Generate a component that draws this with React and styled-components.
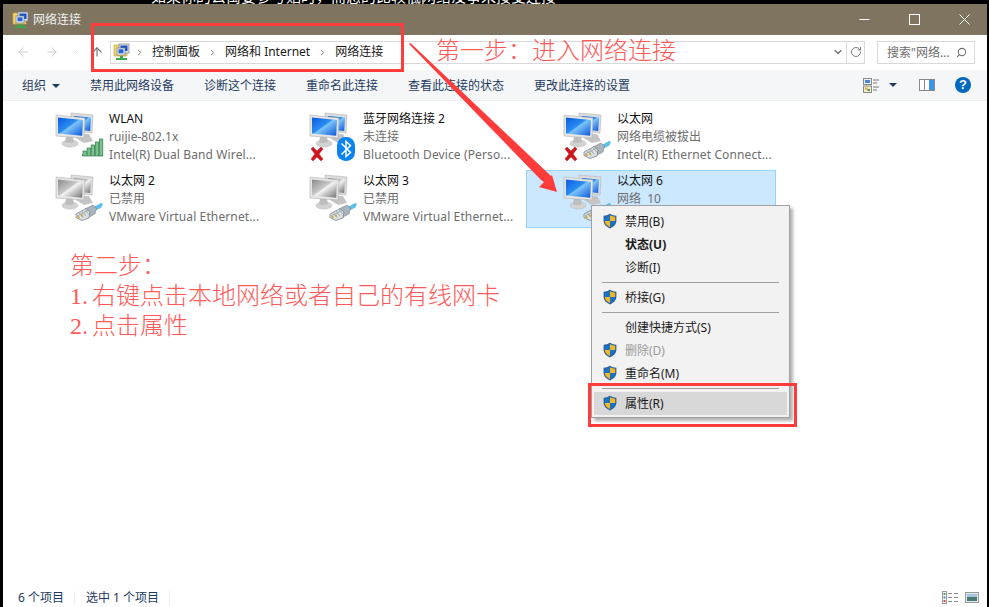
import React, { useId } from "react";
import styled, { createGlobalStyle } from "styled-components";
import { ArrowLeft, ArrowRight, ArrowUp, ChevronDown, ChevronRight, RotateCw, Search } from "lucide-react";

const UI = `"Noto Sans", "Noto Sans CJK SC", sans-serif`;
const RED = "#ff3b3b";

const Global = createGlobalStyle`
  html, body { margin: 0; padding: 0; background: #000; }
  body { font-family: ${UI}; font-size: 12px; overflow: hidden; }
`;

const Stage = styled.div`
  position: relative;
  width: 989px;
  height: 607px;
  overflow: hidden;
  background: #000;
  display: flex;
  flex-direction: column;
  padding: 0 2px 0 3px;
  box-sizing: border-box;
`;
const ClippedStrip = styled.div`
  height: 4px;
  flex: none;
  overflow: hidden;
  color: #fff;
  font-size: 15px;
  padding-left: 148px;
  white-space: nowrap;
`;
const StripText = styled.span`
  display: block;
  line-height: 16px;
  margin-top: -12px;
`;
const Win = styled.div`
  flex: 1;
  display: flex;
  flex-direction: column;
  background: #fff;
  min-height: 0;
`;
const TitleBar = styled.div`
  height: 31px;
  flex: none;
  background: #7f7460;
  color: #f0f0f0;
  display: flex;
  align-items: center;
  padding-left: 9px;
  gap: 4px;
  font-size: 12px;
`;
const TitleText = styled.span`
  flex: 1;
  line-height: 30px;
`;
const Caption = styled.div`
  width: 46px;
  height: 30px;
  display: flex;
  align-items: center;
  justify-content: center;
  color: #fff;
`;
const AddressRow = styled.div`
  height: 35px;
  flex: none;
  background: #fff;
  display: flex;
  align-items: center;
  box-sizing: border-box;
  padding: 0 12px 1px 0;
`;
const NavBtn = styled.div`
  width: ${(p) => p.$w}px;
  display: flex;
  justify-content: center;
  color: ${(p) => p.$c};
  flex: none;
`;
const AddressBox = styled.div`
  width: 755px;
  height: 23px;
  box-sizing: border-box;
  border: 1px solid #d9d9d9;
  display: flex;
  align-items: center;
  padding-left: 2px;
  color: #1a1a1a;
  margin-left: 5px;
  flex: none;
`;
const Crumb = styled.span`
  line-height: 20px;
  white-space: nowrap;
`;
const CrumbSep = styled.span`
  width: 25px;
  display: flex;
  justify-content: center;
  color: #707070;
  flex: none;
  margin-left: ${(p) => (p.$tight ? "-3px" : "0")};
`;
const BoxEnd = styled.div`
  margin-left: auto;
  display: flex;
  align-items: center;
  height: 100%;
`;
const RefreshCell = styled.div`
  width: 17px;
  height: 100%;
  border-left: 1px solid #d9d9d9;
  display: flex;
  align-items: center;
  justify-content: center;
  color: #707070;
`;
const SearchBox = styled.div`
  width: 98px;
  height: 23px;
  box-sizing: border-box;
  border: 1px solid #d9d9d9;
  margin-left: 12px;
  display: flex;
  align-items: center;
  padding: 0 7px 0 9px;
  color: #6d6d6d;
  justify-content: space-between;
  white-space: nowrap;
  flex: none;
`;
const Toolbar = styled.div`
  height: 31px;
  flex: none;
  background: #f5f6f7;
  border-bottom: 1px solid #eeeeee;
  box-sizing: border-box;
  display: flex;
  align-items: center;
  padding: 2px 16px 0 19px;
  gap: 30px;
  color: #1e3a5f;
`;
const ToolBtn = styled.span`
  display: flex;
  align-items: center;
  gap: 6px;
  white-space: nowrap;
  line-height: 28px;
`;
const Caret = styled.span`
  width: 0;
  height: 0;
  border-left: 4px solid transparent;
  border-right: 4px solid transparent;
  border-top: 4px solid #1e3a5f;
  display: block;
`;
const ToolRight = styled.div`
  margin-left: auto;
  display: flex;
  align-items: center;
  margin-top: -2px;
`;
const Help = styled.span`
  width: 16px;
  height: 16px;
  border-radius: 50%;
  background: #0067c0;
  color: #fff;
  font-family: "Liberation Sans", sans-serif;
  font-size: 13px;
  font-weight: 700;
  line-height: 16px;
  text-align: center;
  display: block;
  margin-left: 20px;
`;
const CaretSlot = styled.span`
  margin: 0 22px 0 10px;
`;
const Content = styled.div`
  flex: 1;
  min-height: 0;
  padding: 7px 0 0 15px;
  display: grid;
  grid-template-columns: repeat(3, 250px);
  grid-auto-rows: 58px;
  gap: 4px;
  align-content: start;
`;
const Item = styled.div`
  box-sizing: border-box;
  border: 1px solid ${(p) => (p.$selected ? "#99d1ff" : "transparent")};
  background: ${(p) => (p.$selected ? "#cce8ff" : "transparent")};
  display: flex;
  padding: 0 0 0 36px;
  gap: 4px;
`;
const ItemIcon = styled.svg`
  width: 50px;
  height: 52px;
  flex: none;
  margin-top: 1px;
`;
const ItemText = styled.div`
  display: flex;
  flex-direction: column;
  white-space: nowrap;
  padding-top: 1px;
`;
const ItemLine = styled.span`
  line-height: 18px;
  height: 18px;
  white-space: pre;
  letter-spacing: ${(p) => (p.$detail ? "0.12px" : "0")};
  color: ${(p) => (p.$name ? "#111" : "#6d6d6d")};
`;
const StatusBar = styled.div`
  height: 22px;
  flex: none;
  box-sizing: border-box;
  display: flex;
  align-items: center;
  padding: 3px 8px 0 15px;
  color: #1e3a5f;
`;
const StatusText = styled.span`
  line-height: 19px;
  white-space: nowrap;
`;
const StatusSep = styled.span`
  width: 1px;
  height: 14px;
  background: #eeeeee;
  margin: 0 11px 0 10px;
`;
const StatusRight = styled.div`
  margin-left: auto;
  display: flex;
  gap: 7px;
  align-items: center;
`;
const Menu = styled.div`
  position: absolute;
  left: 591px;
  top: 205px;
  width: 199px;
  box-sizing: border-box;
  background: #f2f2f2;
  border: 1px solid #a0a0a0;
  padding: 4px 2px 2px;
  box-shadow: 3px 3px 3px rgba(0, 0, 0, 0.3);
  z-index: 2;
`;
const MenuItem = styled.div`
  height: 23px;
  box-sizing: border-box;
  display: flex;
  align-items: center;
  padding: 0 0 1px 8px;
  color: ${(p) => (p.$disabled ? "#9a9a9a" : "#1a1a1a")};
  font-weight: ${(p) => (p.$bold ? 700 : 400)};
  background: ${(p) => (p.$active ? "#d8d8d8" : "transparent")};
`;
const MenuIconSlot = styled.span`
  width: 16px;
  height: 16px;
  margin-right: 7px;
  display: block;
  flex: none;
`;
const MenuSep = styled.div`
  height: 1px;
  margin: 3px 8px;
  background: #a0a0a0;
`;
const Frame = styled.div`
  position: absolute;
  box-sizing: border-box;
  border: 3px solid ${RED};
  left: ${(p) => p.$x}px;
  top: ${(p) => p.$y}px;
  width: ${(p) => p.$w}px;
  height: ${(p) => p.$h}px;
  z-index: 3;
`;
const Note = styled.div`
  position: absolute;
  left: ${(p) => p.$x}px;
  top: ${(p) => p.$y}px;
  color: #ff5a5a;
  font-family: "Liberation Serif", "Noto Sans CJK SC", serif;
  font-size: 24px;
  font-weight: 300;
  line-height: 30px;
  word-spacing: -2px;
  white-space: pre;
  z-index: 3;
`;
const ArrowLayer = styled.svg`
  position: absolute;
  left: 0;
  top: 0;
  width: 989px;
  height: 607px;
  z-index: 3;
  pointer-events: none;
`;

function Monitors({ gray }) {
  const id = useId();
  const a = gray ? "#f4f4f4" : "#7cc4fb";
  const b = gray ? "#6f6f6f" : "#0a55d8";
  return (
    <g>
      <defs>
        <linearGradient id={id} x1="0" y1="0" x2="1" y2="1">
          <stop offset="0" stopColor={gray ? "#8a8a8a" : "#0a5be0"} />
          <stop offset="0.45" stopColor={gray ? "#c8c8c8" : "#2b8cf0"} />
          <stop offset="0.5" stopColor={a} />
          <stop offset="1" stopColor={b} />
        </linearGradient>
      </defs>
      <path d="M24 24l-3 4 8 5 9-2-4-7z" fill="#c4c4c4" />
      <path d="M16 3l22 2-1 18-21-2z" fill="#dcdcdc" stroke="#b4b4b4" strokeWidth=".6" />
      <path d="M19 6l17 1.500-.8 13.500L19 19.500z" fill={`url(#${id})`} />
      <ellipse cx="15" cy="33.500" rx="8" ry="3.600" fill="#d2d2d2" stroke="#b8b8b8" strokeWidth=".5" />
      <path d="M11 27h7l1 5c-3 1.400-7 1.400-9 0z" fill="#bdbdbd" />
      <path d="M1 5l29 3-1 20-28-2z" fill="#e6e6e6" stroke="#b0b0b0" strokeWidth=".6" />
      <path d="M3 7.500l25 2.600-.8 15.600L3 23.600z" fill={`url(#${id})`} />
    </g>
  );
}
const Signal = () => (
  <g>
    <path d="M27 44.500h3v1.500h-3z" fill="#2f8a4f" />
    {[0, 1, 2, 3, 4].map((i) => (
      <rect key={i} x={28 + i * 4.1} y={41 - i * 3} width="3.4" height={5 + i * 3} fill="#7cc08f" stroke="#2c7d48" strokeWidth=".7" />
    ))}
  </g>
);
const Cross = () => (
  <path d="M2 39l2-2 4 4 4-4 2 2-4 5 4 5-2 2-4-4-4 4-2-2 4-5z" fill="#d0161c" stroke="#a51015" strokeWidth=".4" />
);
const Bluetooth = () => (
  <g>
    <rect x="28" y="27" width="18" height="24" rx="8.5" fill="#0a84f0" />
    <path d="M32.500 33.500l9 9-4.500 4V31.500l4.500 4-9 9" fill="none" stroke="#fff" strokeWidth="1.500" />
  </g>
);
const Ethernet = () => (
  <g>
    <path d="M37 36l9-5 2 .8-1.500 3.700-7 3.500z" fill="#5cc0ea" />
    <path d="M30 37l8-4 3.500 3-1.500 6-6 3z" fill="#a9b4bc" stroke="#7b838a" strokeWidth=".6" />
    <path d="M21 42l10-5.500 4 3.500-1 6-7 2.500-6-3z" fill="#d9dfe4" stroke="#7b838a" strokeWidth=".8" />
    <path d="M24 40.500l4 5M27 39l4 5M30 37.500l4 5M22 44l12-6" stroke="#8d979f" strokeWidth=".7" fill="none" />
    <path d="M22 44.500l1.500 2 1.500-.8-1.500-2zM25.500 43l1.500 2 1.500-.8-1.500-2z" fill="#c9a63a" />
  </g>
);
function ConnIcon({ gray, badges }) {
  return (
    <ItemIcon viewBox="0 0 50 52">
      <Monitors gray={gray} />
      {badges.includes("signal") && <Signal />}
      {badges.includes("cross") && <Cross />}
      {badges.includes("bt") && <Bluetooth />}
      {badges.includes("eth") && <Ethernet />}
    </ItemIcon>
  );
}
const Shield = () => (
  <MenuIconSlot as="svg" viewBox="0 0 16 16">
    <path d="M8 .8C6 2 4 2.600 1.600 2.800v5C1.600 11.400 4.500 14 8 15.400c3.500-1.400 6.400-4 6.400-7.600v-5C12 2.600 10 2 8 .8z" fill="#2a5f9e" />
    <path d="M8 2.200v5.800H2.800V3.700C4.800 3.500 6.400 3 8 2.200z" fill="#1573c9" />
    <path d="M8 2.200c1.600.8 3.200 1.300 5.200 1.500V8H8z" fill="#f4b921" />
    <path d="M2.800 8H8v6.100C5 12.800 2.800 10.800 2.800 8z" fill="#f4b921" />
    <path d="M8 8h5.200c0 2.800-2.200 4.800-5.200 6.100z" fill="#1573c9" />
  </MenuIconSlot>
);
const NetIcon = () => (
  <svg width="17" height="18" viewBox="0 0 17 18" style={{ flex: "none" }}>
    <path d="M1 2h7l1.500 2H14v9H1z" fill="#f2d46a" stroke="#c9a63a" strokeWidth=".7" />
    <rect x="6" y="1" width="10" height="9" fill="#dfe5ec" stroke="#6f7f90" strokeWidth=".7" />
    <rect x="7.500" y="2.500" width="7" height="5.500" fill="#1c4fc0" />
    <rect x="4" y="5" width="8" height="7" fill="#e8edf2" stroke="#6f7f90" strokeWidth=".7" />
    <rect x="5.500" y="6.300" width="5" height="4" fill="#2a62d8" />
    <path d="M7 13h3v2h4v2H3v-2h4z" fill="#39a84a" />
  </svg>
);

const items = [
  { lines: ["WLAN", "ruijie-802.1x", "Intel(R) Dual Band Wirel..."], badges: ["signal"] },
  { lines: ["蓝牙网络连接 2", "未连接", "Bluetooth Device (Perso..."], badges: ["cross", "bt"] },
  { lines: ["以太网", "网络电缆被拔出", "Intel(R) Ethernet Connect..."], badges: ["cross", "eth"] },
  { lines: ["以太网 2", "已禁用", "VMware Virtual Ethernet..."], badges: ["eth"], gray: true },
  { lines: ["以太网 3", "已禁用", "VMware Virtual Ethernet..."], badges: ["eth"], gray: true },
  { lines: ["以太网 6", "网络  10"], badges: ["eth"], selected: true },
];

export default function App() {
  return (
    <Stage>
      <Global />
      <ClippedStrip><StripText>如果你的公寓要参考贴时，而您的比较低网络没事来接受连接</StripText></ClippedStrip>
      <Win>
        <TitleBar>
          <NetIcon />
          <TitleText>网络连接</TitleText>
          <Caption>
            <svg width="11" height="11" viewBox="0 0 11 11"><path d="M0.500 5.500h10" stroke="#fff" /></svg>
          </Caption>
          <Caption>
            <svg width="11" height="11" viewBox="0 0 11 11"><rect x=".5" y=".5" width="10" height="10" fill="none" stroke="#fff" /></svg>
          </Caption>
          <Caption>
            <svg width="11" height="11" viewBox="0 0 11 11"><path d="M.5 .5l10 10M10.500 .5l-10 10" stroke="#fff" fill="none" /></svg>
          </Caption>
        </TitleBar>
        <AddressRow>
          <NavBtn $w={40} $c="#c9c9c9"><ArrowLeft size={14} strokeWidth={1.6} /></NavBtn>
          <NavBtn $w={18} $c="#c9c9c9"><ArrowRight size={14} strokeWidth={1.6} /></NavBtn>
          <NavBtn $w={28} $c="#d0d0d0"><ChevronDown size={9} strokeWidth={2} /></NavBtn>
          <NavBtn $w={16} $c="#777"><ArrowUp size={14} strokeWidth={2} /></NavBtn>
          <AddressBox>
            <NetIcon />
            <CrumbSep $tight><ChevronRight size={9} strokeWidth={2.4} /></CrumbSep>
            <Crumb>控制面板</Crumb>
            <CrumbSep><ChevronRight size={9} strokeWidth={2.4} /></CrumbSep>
            <Crumb>网络和 Internet</Crumb>
            <CrumbSep><ChevronRight size={9} strokeWidth={2.4} /></CrumbSep>
            <Crumb>网络连接</Crumb>
            <BoxEnd>
              <NavBtn $w={17} $c="#707070"><ChevronDown size={12} strokeWidth={2.4} /></NavBtn>
              <RefreshCell><RotateCw size={12} strokeWidth={1.8} /></RefreshCell>
            </BoxEnd>
          </AddressBox>
          <SearchBox>
            <span>搜索"网络...</span>
            <Search size={11} strokeWidth={2.2} style={{ transform: "scaleX(-1)" }} />
          </SearchBox>
        </AddressRow>
        <Toolbar>
          <ToolBtn>组织<Caret /></ToolBtn>
          <ToolBtn>禁用此网络设备</ToolBtn>
          <ToolBtn>诊断这个连接</ToolBtn>
          <ToolBtn>重命名此连接</ToolBtn>
          <ToolBtn>查看此连接的状态</ToolBtn>
          <ToolBtn>更改此连接的设置</ToolBtn>
          <ToolRight>
            <svg width="16" height="15" viewBox="0 0 16 15">
              <rect x=".5" y=".5" width="8" height="6" fill="#e8f0f8" stroke="#8a8a8a" />
              <rect x="2" y="2" width="5" height="3" fill="#4a86c8" />
              <rect x=".5" y="8" width="8" height="6.500" fill="#f3e9c9" stroke="#8a8a8a" />
              <rect x="2" y="9.500" width="2.500" height="2" fill="#d9a23a" />
              <rect x="4.500" y="11" width="2.500" height="2" fill="#4e9a52" />
              <path d="M10 2h6M10 5h4M10 9h6M10 12h4" stroke="#777" strokeWidth="1" />
            </svg>
            <CaretSlot><Caret /></CaretSlot>
            <svg width="16" height="12" viewBox="0 0 16 12">
              <rect x=".5" y=".5" width="15" height="11" fill="#fff" stroke="#8a8a8a" />
              <rect x="10" y="1" width="5" height="10" fill="#3b96e6" />
              <path d="M5.500 1v10" stroke="#8a8a8a" />
            </svg>
            <Help>?</Help>
          </ToolRight>
        </Toolbar>
        <Content>
          {items.map((it) => (
            <Item key={it.lines[0]} $selected={it.selected}>
              <ConnIcon gray={it.gray} badges={it.badges} />
              <ItemText>
                {it.lines.map((l, i) => (
                  <ItemLine key={l} $name={i === 0} $detail={i === 2}>{l}</ItemLine>
                ))}
              </ItemText>
            </Item>
          ))}
        </Content>
        <StatusBar>
          <StatusText>6 个项目</StatusText>
          <StatusSep />
          <StatusText>选中 1 个项目</StatusText>
          <StatusSep />
          <StatusRight>
            <svg width="16" height="13" viewBox="0 0 16 13">
              <rect x=".5" y=".5" width="4" height="12" fill="#fff" stroke="#9a9a9a" />
              <rect x="1.500" y="2" width="2" height="2" fill="#4f9a6a" />
              <rect x="1.500" y="5.500" width="2" height="2" fill="#3b82d8" />
              <rect x="1.500" y="9" width="2" height="2" fill="#d84a3b" />
              <path d="M6 2.500h4M12 2.500h4M6 6.500h4M12 6.500h4M6 10.500h4M12 10.500h4" stroke="#8a8a8a" />
            </svg>
            <svg width="14" height="11" viewBox="0 0 14 11">
              <rect x=".5" y=".5" width="13" height="10" fill="#dfe9f2" stroke="#9a9a9a" />
              <rect x="2" y="2" width="10" height="3" fill="#a8c4de" />
              <rect x="2" y="5" width="10" height="4" fill="#4c7a72" />
            </svg>
          </StatusRight>
        </StatusBar>
      </Win>

      <Menu>
        <MenuItem><Shield />禁用(B)</MenuItem>
        <MenuItem $bold><MenuIconSlot />状态(U)</MenuItem>
        <MenuItem><MenuIconSlot />诊断(I)</MenuItem>
        <MenuSep />
        <MenuItem><Shield />桥接(G)</MenuItem>
        <MenuSep />
        <MenuItem><MenuIconSlot />创建快捷方式(S)</MenuItem>
        <MenuItem $disabled><Shield />删除(D)</MenuItem>
        <MenuItem><Shield />重命名(M)</MenuItem>
        <MenuSep />
        <MenuItem $active><Shield />属性(R)</MenuItem>
      </Menu>

      <Frame $x={91} $y={23} $w={313} $h={49} />
      <Frame $x={588} $y={383} $w={209} $h={44} />
      <ArrowLayer viewBox="0 0 989 607">
        <path d="M409 44l1.500-1L551 176l1-1 5 17-18-5 5-5-3-2z" fill={RED} />
      </ArrowLayer>
      <Note $x={436} $y={36}>第一步：进入网络连接</Note>
      <Note $x={70} $y={251}>{"第二步：\n1. 右键点击本地网络或者自己的有线网卡\n2. 点击属性"}</Note>
    </Stage>
  );
}
